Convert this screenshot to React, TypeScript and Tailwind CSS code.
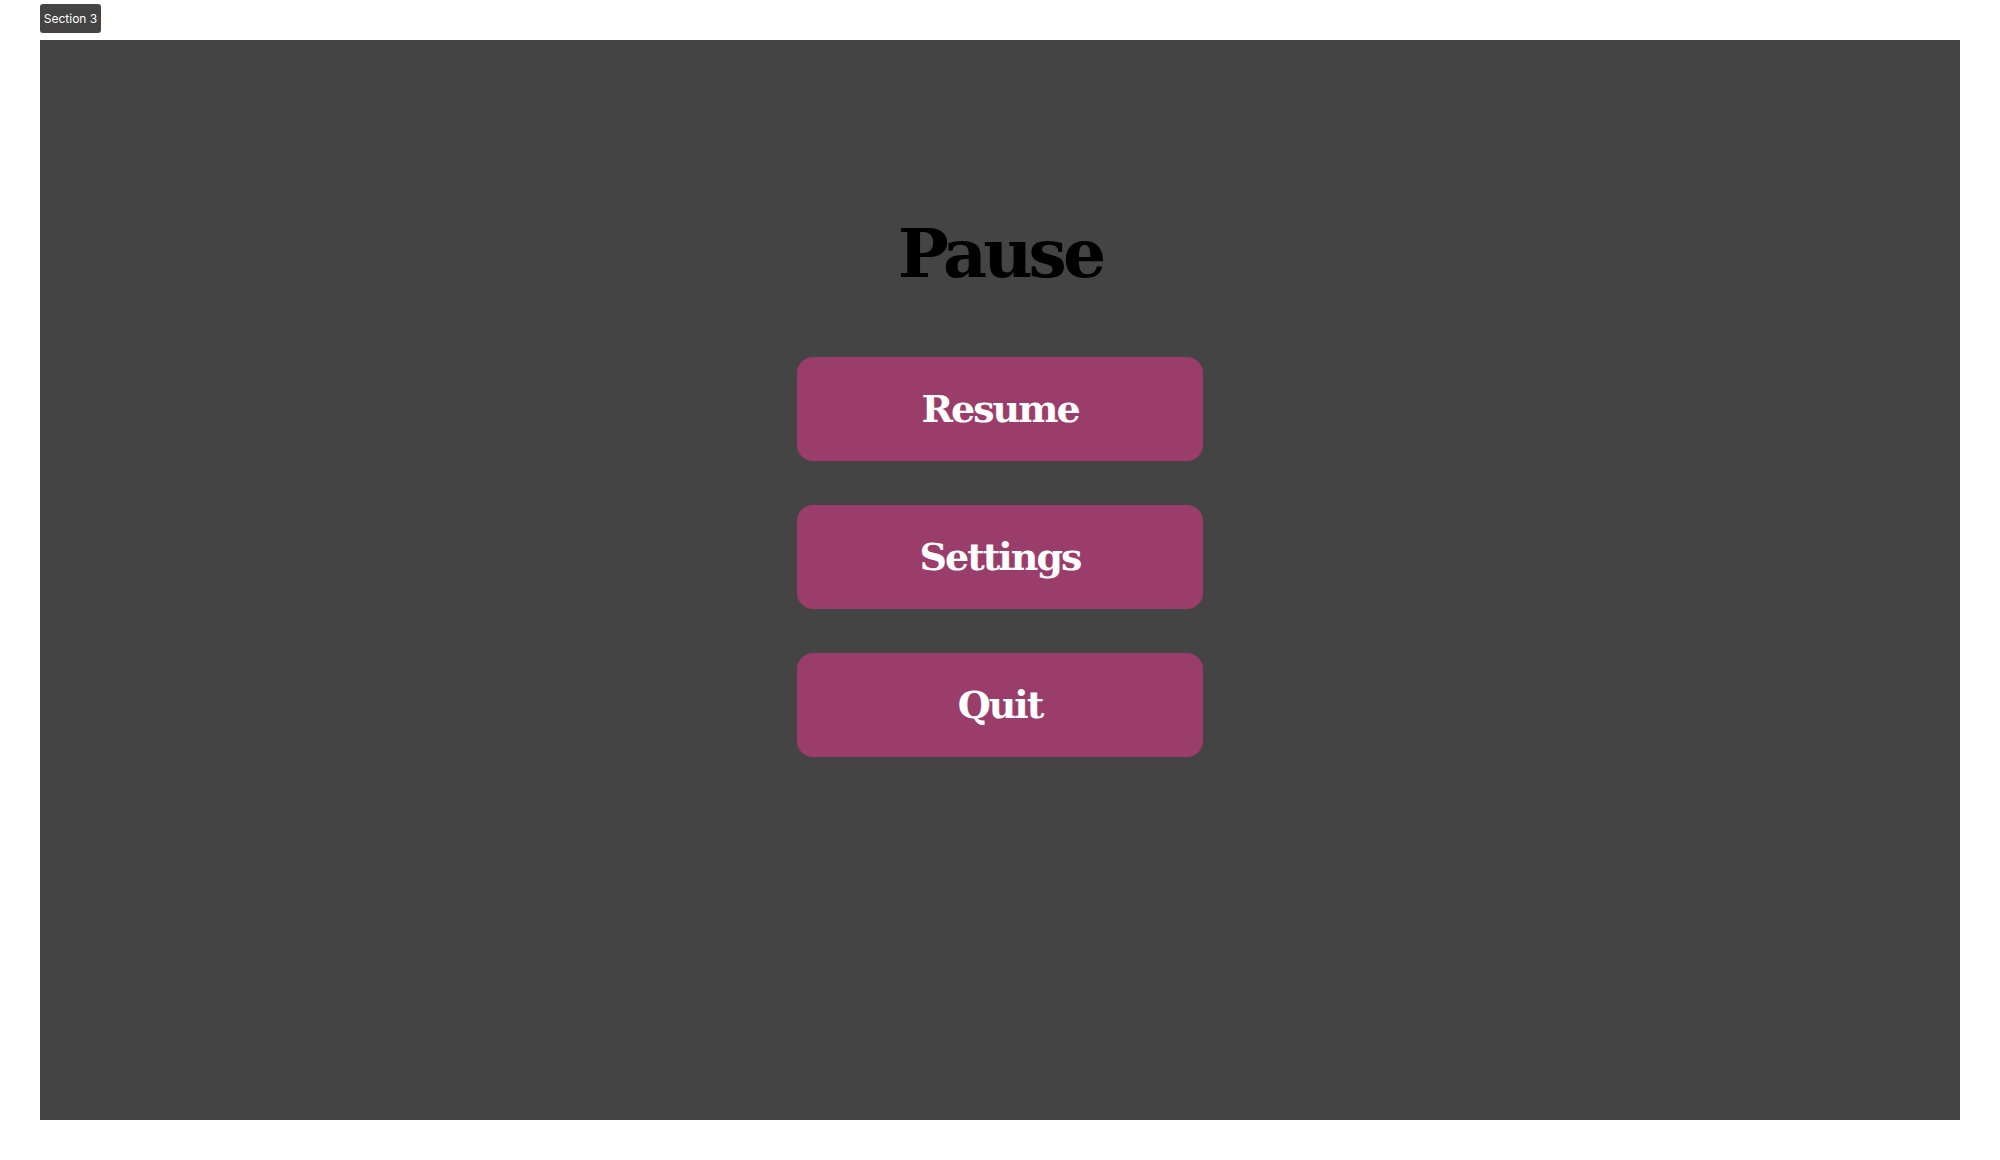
export default function App() {
  const btn =
    "w-[406px] h-[104px] rounded-[16px] bg-[#9b3d6a] text-white flex items-center justify-center text-[38px] font-bold leading-none tracking-[-2px]";
  const serif = { fontFamily: '"DejaVu Serif", serif' };
  return (
    <div className="min-h-[1160px] bg-white pl-[40px] pt-[4px]">
      <div
        className="h-[29px] w-[61px] rounded-[3px] bg-[#444444] text-white text-[12px] flex items-center justify-center"
        style={{ fontFamily: 'Inter, "Noto Sans", sans-serif' }}
      >
        Section 3
      </div>
      <div className="mt-[7px] w-[1920px] h-[1080px] bg-[#444444] flex flex-col items-center pt-[179px]">
        <h1
          className="text-[68px] font-bold leading-none text-black tracking-[-4px]"
          style={serif}
        >
          Pause
        </h1>
        <div className="mt-[70px] flex flex-col gap-[44px]" style={serif}>
          <button className={btn}>Resume</button>
          <button className={btn}>Settings</button>
          <button className={btn}>Quit</button>
        </div>
      </div>
    </div>
  );
}
